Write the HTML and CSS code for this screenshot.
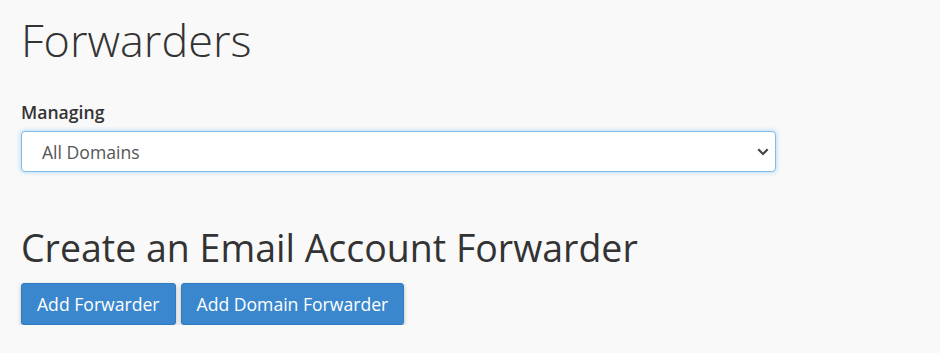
FILE: index.html
```html
<!DOCTYPE html>
<html>
<head>
<meta charset="utf-8">
<link rel="stylesheet" href="styles.css">
</head>
<body>
<div class="page">
  <h1 class="title">Forwarders</h1>
  <div class="field">
    <label class="label">Managing</label>
    <div class="select">
      <span class="select-text">All Domains</span>
      <svg class="chev" width="12" height="8" viewBox="0 0 12 8"><path d="M1.3 1.3 L6 6 L10.7 1.3" fill="none" stroke="#444" stroke-width="2.2"/></svg>
    </div>
  </div>
  <h2 class="subtitle">Create an Email Account Forwarder</h2>
  <div class="buttons">
    <button class="btn">Add Forwarder</button>
    <button class="btn">Add Domain Forwarder</button>
  </div>
</div>
</body>
</html>
```
FILE: styles.css
```css
html, body {
  margin: 0;
  padding: 0;
  background: #f9f9f9;
}
body {
  font-family: "Open Sans", sans-serif;
  color: #333;
}
.page {
  padding: 0 0 0 21px;
  width: 755px;
}
.title {
  font-weight: 300;
  font-size: 45px;
  line-height: 60px;
  margin: 10px 0 0 0;
  color: #333;
}
.field {
  margin-top: 30px;
  display: flex;
  flex-direction: column;
}
.label {
  font-weight: 600;
  font-size: 17.6px;
  line-height: 24px;
  color: #333;
}
.select {
  margin-top: 7px;
  height: 41px;
  box-sizing: border-box;
  border: 1px solid #80bdea;
  border-radius: 4px;
  background: #fff;
  box-shadow: 0 0 5px rgba(102, 175, 233, 0.55);
  display: flex;
  align-items: center;
  justify-content: space-between;
  padding: 0 6px 0 20px;
}
.select-text {
  font-size: 17.6px;
  color: #555;
}
.subtitle {
  font-weight: 400;
  font-size: 37.5px;
  line-height: 52px;
  margin: 50px 0 0 0;
  color: #333;
}
.buttons {
  display: flex;
  gap: 5px;
  margin-top: 9px;
}
.btn {
  font-family: "Open Sans", sans-serif;
  font-size: 17.6px;
  color: #fff;
  background: #3a87cd;
  border: 1px solid #2f7cc4;
  border-radius: 3px;
  height: 42px;
  padding: 0 15px;
  box-shadow: 0 2px 4px rgba(0, 0, 0, 0.25);
}
```
